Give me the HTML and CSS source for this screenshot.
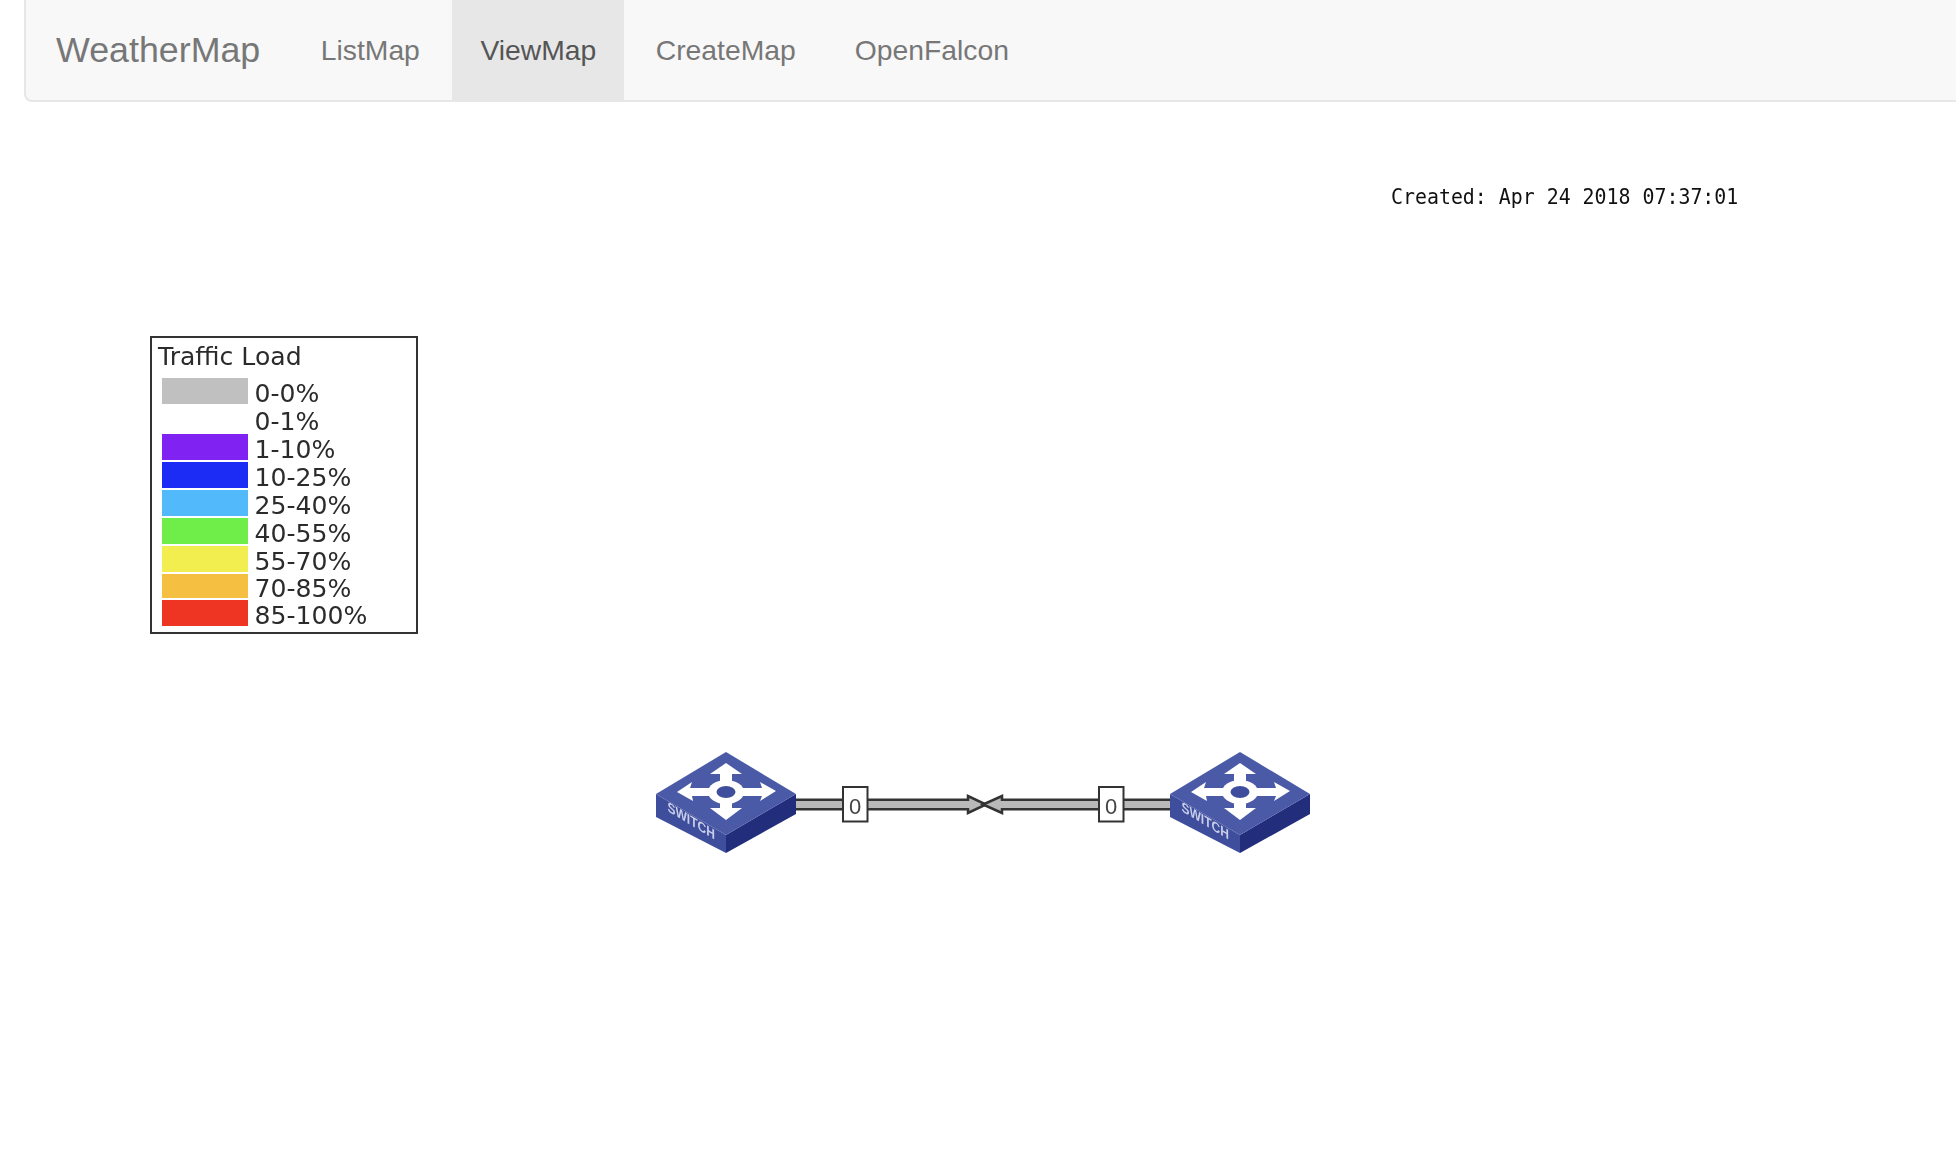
FILE: index.html
```html
<!DOCTYPE html>
<html lang="en">
<head>
  <meta charset="UTF-8" />
  <title>WeatherMap</title>
  <link rel="stylesheet" href="styles.css">
</head>
<body>
  <nav class="navbar">
    <a class="brand" href="#">WeatherMap</a>
    <ul class="nav-links">
      <li><a href="#">ListMap</a></li>
      <li class="active"><a href="#">ViewMap</a></li>
      <li><a href="#">CreateMap</a></li>
      <li><a href="#">OpenFalcon</a></li>
    </ul>
  </nav>

  <main class="map">
    <div class="created">Created: Apr 24 2018 07:37:01</div>

    <div class="legend">
      <div class="legend-title">Traffic Load</div>
      <div class="legend-row"><span class="swatch c-idle"></span><span>0-0%</span></div>
      <div class="legend-row"><span class="swatch c-none"></span><span>0-1%</span></div>
      <div class="legend-row"><span class="swatch c-purple"></span><span>1-10%</span></div>
      <div class="legend-row"><span class="swatch c-blue"></span><span>10-25%</span></div>
      <div class="legend-row"><span class="swatch c-sky"></span><span>25-40%</span></div>
      <div class="legend-row"><span class="swatch c-green"></span><span>40-55%</span></div>
      <div class="legend-row"><span class="swatch c-yellow"></span><span>55-70%</span></div>
      <div class="legend-row short"><span class="swatch c-orange"></span><span>70-85%</span></div>
      <div class="legend-row"><span class="swatch c-red"></span><span>85-100%</span></div>
    </div>

    <svg class="diagram" viewBox="650 745 670 115" width="670" height="115">
      <!-- links -->
      <path class="link" d="M790 799.8H968V796L986 804.5L968 813V809.3H790Z"/>
      <path class="link" d="M1175 799.8H1002V796L983 804.5L1002 813V809.3H1175Z"/>
      <rect class="label-box" x="843" y="787" width="24.5" height="34.5"/>
      <text class="label-num" x="855.2" y="814">0</text>
      <rect class="label-box" x="1099" y="787" width="24.5" height="34.5"/>
      <text class="label-num" x="1111.2" y="814">0</text>

      <!-- left switch -->
      <g class="switch">
        <path class="side-left" d="M656 794L726 835V853L656 817Z"/>
        <path class="side-right" d="M796 794L726 835V853L796 814Z"/>
        <path class="top" d="M726 752L796 794L726 835L656 794Z"/>
        <path class="arrows" d="M726 763L742 774H732V785H720V774H710Z"/>
        <path class="arrows" d="M726 820L742 808H732V798H720V808H710Z"/>
        <path class="arrows" d="M677 792L692 782L690 788H712V796H692L693 801Z"/>
        <path class="arrows" d="M776 791L760 782L762 788H740V796H762L760 801Z"/>
        <ellipse class="arrows" cx="726" cy="792" rx="18" ry="12"/>
        <ellipse class="hub" cx="726" cy="792" rx="9.5" ry="6"/>
        <text class="switch-text" transform="translate(667.5 811) matrix(.86 .52 0 1 0 0)">SWITCH</text>
      </g>

      <!-- right switch -->
      <g class="switch" transform="translate(514 0)">
        <path class="side-left" d="M656 794L726 835V853L656 817Z"/>
        <path class="side-right" d="M796 794L726 835V853L796 814Z"/>
        <path class="top" d="M726 752L796 794L726 835L656 794Z"/>
        <path class="arrows" d="M726 763L742 774H732V785H720V774H710Z"/>
        <path class="arrows" d="M726 820L742 808H732V798H720V808H710Z"/>
        <path class="arrows" d="M677 792L692 782L690 788H712V796H692L693 801Z"/>
        <path class="arrows" d="M776 791L760 782L762 788H740V796H762L760 801Z"/>
        <ellipse class="arrows" cx="726" cy="792" rx="18" ry="12"/>
        <ellipse class="hub" cx="726" cy="792" rx="9.5" ry="6"/>
        <text class="switch-text" transform="translate(667.5 811) matrix(.86 .52 0 1 0 0)">SWITCH</text>
      </g>
    </svg>
  </main>
</body>
</html>
```

FILE: styles.css
```css
* {
  box-sizing: border-box;
}
body {
  margin: 0;
  background-color: #fff;
  font-family: "Liberation Sans", Arial, sans-serif;
  color: #333;
  overflow: hidden;
}
a {
  text-decoration: none;
}

/* top bar */
.navbar {
  display: flex;
  align-items: stretch;
  height: 102px;
  margin-left: 24px;
  background-color: #f8f8f8;
  border: 2px solid #e7e7e7;
  border-top: none;
  border-right: none;
  border-radius: 0 0 0 8px;
}
.brand {
  display: flex;
  align-items: center;
  padding: 0 31px 0 30px;
  font-size: 35.8px;
  color: #777;
}
.nav-links {
  display: flex;
  margin: 0;
  padding: 0;
  list-style: none;
}
.nav-links a {
  display: flex;
  align-items: center;
  height: 100%;
  padding: 0 29.5px;
  font-size: 28.3px;
  color: #777;
}
.nav-links .active {
  margin: 0 2px 0 3px;
}
.nav-links .active a {
  padding: 0 28px;
  background-color: #e7e7e7;
  color: #555;
}

/* the map picture */
.map {
  position: relative;
  height: 1050px;
}
.created {
  position: absolute;
  left: 1391px;
  top: 80px;
  font-family: "DejaVu Sans Mono", monospace;
  font-size: 19.9px;
  line-height: 30px;
  color: #111;
  white-space: nowrap;
  transform: scaleY(1.1);
  filter: blur(0.3px);
}

.legend {
  position: absolute;
  left: 150px;
  top: 234px;
  width: 268px;
  height: 298px;
  padding: 0 0 0 10px;
  background-color: #fff;
  border: 2px solid #333;
  font-family: "DejaVu Sans", sans-serif;
  font-size: 25.1px;
  color: #2b2b2b;
  filter: blur(0.35px);
}
.legend-title {
  height: 40px;
  margin-left: -4px;
  line-height: 38px;
}
.legend-row {
  display: flex;
  gap: 7px;
  height: 28px;
  line-height: 32px;
}
.legend-row.short {
  height: 26px;
  line-height: 29px;
}
.swatch {
  flex: none;
  width: 85.5px;
  height: 26px;
}
.short .swatch {
  height: 24px;
}
.c-idle { background-color: #c0c0c0; }
.c-none { background-color: #fff; }
.c-purple { background-color: #7f22f2; }
.c-blue { background-color: #1d2cf5; }
.c-sky { background-color: #52b9fb; }
.c-green { background-color: #6fee4a; }
.c-yellow { background-color: #f2ee50; }
.c-orange { background-color: #f5bf42; }
.c-red { background-color: #ee3524; }

.diagram {
  position: absolute;
  left: 650px;
  top: 643px;
  filter: blur(0.5px);
}
.link {
  fill: #b9b9b9;
  stroke: #333;
  stroke-width: 2.5;
}
.label-box {
  fill: #fff;
  stroke: #333;
  stroke-width: 2;
}
.label-num {
  font-family: "Liberation Sans", sans-serif;
  font-size: 22px;
  fill: #444;
  text-anchor: middle;
}
.top { fill: #4a5aa6; }
.side-left { fill: #3f4e9c; }
.side-right { fill: #222d7c; }
.arrows { fill: #fff; }
.hub { fill: #3f4e9c; }
.switch-text {
  font-family: "Liberation Sans", sans-serif;
  font-size: 14px;
  font-weight: bold;
  fill: #c8cde8;
}
```
